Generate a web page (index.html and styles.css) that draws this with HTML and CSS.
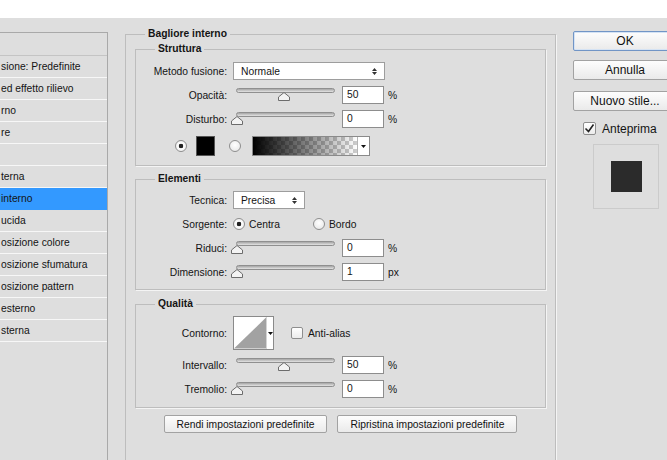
FILE: index.html
```html
<!DOCTYPE html>
<html lang="it">
<head>
  <meta charset="UTF-8" />
  <meta name="viewport" content="width=device-width, initial-scale=1.0"/>
  <title>Stile livello</title>
  <link rel="stylesheet" href="styles.css">
</head>
<body>
  <div class="topbar"></div>

  <div class="dialog">
    <ul class="styles-list">
      <li class="head"></li>
      <li>sione: Predefinite</li>
      <li>ed effetto rilievo</li>
      <li>rno</li>
      <li>re</li>
      <li></li>
      <li>terna</li>
      <li class="active">interno</li>
      <li>ucida</li>
      <li>osizione colore</li>
      <li>osizione sfumatura</li>
      <li>osizione pattern</li>
      <li>esterno</li>
      <li>sterna</li>
    </ul>

    <fieldset class="effect">
      <legend>Bagliore interno</legend>

      <fieldset class="group struttura">
        <legend>Struttura</legend>
        <div class="row">
          <span class="lbl">Metodo fusione:</span>
          <div class="select blend">Normale
            <svg class="updown" width="5" height="9" viewBox="0 0 5 9"><path d="M0 4 L2.5 1 L5 4 Z M0 5 L2.5 8 L5 5 Z"/></svg>
          </div>
        </div>
        <div class="row">
          <span class="lbl">Opacità:</span>
          <div class="slider"><div class="track"></div>
            <svg class="thumb" style="left:42px" width="12" height="9" viewBox="0 0 12 9"><path d="M6 0.5 L11.5 5 V8.5 H0.5 V5 Z"/></svg>
          </div>
          <div class="field">50</div><span class="unit">%</span>
        </div>
        <div class="row">
          <span class="lbl">Disturbo:</span>
          <div class="slider"><div class="track"></div>
            <svg class="thumb" style="left:-5px" width="12" height="9" viewBox="0 0 12 9"><path d="M6 0.5 L11.5 5 V8.5 H0.5 V5 Z"/></svg>
          </div>
          <div class="field">0</div><span class="unit">%</span>
        </div>
        <div class="row colors">
          <span class="radio on"></span>
          <span class="swatch"></span>
          <span class="radio"></span>
          <div class="gradient-pick">
            <div class="gradient-fill"></div>
            <div class="drop"><svg width="5" height="3" viewBox="0 0 5 3"><path d="M0 0 H5 L2.5 3 Z"/></svg></div>
          </div>
        </div>
      </fieldset>

      <fieldset class="group elementi">
        <legend>Elementi</legend>
        <div class="row">
          <span class="lbl">Tecnica:</span>
          <div class="select technique">Precisa
            <svg class="updown" width="5" height="9" viewBox="0 0 5 9"><path d="M0 4 L2.5 1 L5 4 Z M0 5 L2.5 8 L5 5 Z"/></svg>
          </div>
        </div>
        <div class="row">
          <span class="lbl">Sorgente:</span>
          <span class="option first"><span class="radio on"></span>Centra</span>
          <span class="option"><span class="radio"></span>Bordo</span>
        </div>
        <div class="row">
          <span class="lbl">Riduci:</span>
          <div class="slider"><div class="track"></div>
            <svg class="thumb" style="left:-5px" width="12" height="9" viewBox="0 0 12 9"><path d="M6 0.5 L11.5 5 V8.5 H0.5 V5 Z"/></svg>
          </div>
          <div class="field">0</div><span class="unit">%</span>
        </div>
        <div class="row">
          <span class="lbl">Dimensione:</span>
          <div class="slider"><div class="track"></div>
            <svg class="thumb" style="left:-5px" width="12" height="9" viewBox="0 0 12 9"><path d="M6 0.5 L11.5 5 V8.5 H0.5 V5 Z"/></svg>
          </div>
          <div class="field">1</div><span class="unit">px</span>
        </div>
      </fieldset>

      <fieldset class="group qualita">
        <legend>Qualità</legend>
        <div class="row tall">
          <span class="lbl">Contorno:</span>
          <div class="contour">
            <svg width="33" height="32" viewBox="0 0 33 32"><path d="M0 32 L33 0 V32 Z"/></svg>
            <div class="drop"><svg width="5" height="3" viewBox="0 0 5 3"><path d="M0 0 H5 L2.5 3 Z"/></svg></div>
          </div>
          <span class="check"></span><span>Anti-alias</span>
        </div>
        <div class="row">
          <span class="lbl">Intervallo:</span>
          <div class="slider"><div class="track"></div>
            <svg class="thumb" style="left:42px" width="12" height="9" viewBox="0 0 12 9"><path d="M6 0.5 L11.5 5 V8.5 H0.5 V5 Z"/></svg>
          </div>
          <div class="field">50</div><span class="unit">%</span>
        </div>
        <div class="row">
          <span class="lbl">Tremolio:</span>
          <div class="slider"><div class="track"></div>
            <svg class="thumb" style="left:-5px" width="12" height="9" viewBox="0 0 12 9"><path d="M6 0.5 L11.5 5 V8.5 H0.5 V5 Z"/></svg>
          </div>
          <div class="field">0</div><span class="unit">%</span>
        </div>
      </fieldset>

      <div class="defaults">
        <button class="btn small">Rendi impostazioni predefinite</button>
        <button class="btn small">Ripristina impostazioni predefinite</button>
      </div>
    </fieldset>

    <div class="actions">
      <button class="btn default">OK</button>
      <button class="btn">Annulla</button>
      <button class="btn new">Nuovo stile...</button>
      <label class="preview-toggle">
        <span class="check on"><svg width="11" height="11" viewBox="0 0 11 11"><path d="M1.5 5.5 L4.5 8.5 L9.5 1.5"/></svg></span>
        Anteprima
      </label>
      <div class="preview"><div class="preview-square"></div></div>
    </div>
  </div>
</body>
</html>
```

FILE: styles.css
```css
html, body {
  margin: 0;
  height: 460px;
  overflow: hidden;
}
body {
  font-family: "Liberation Sans", Arial, sans-serif;
  font-size: 10.3px;
  color: #141414;
  background: #dedede;
}
.topbar {
  height: 18px;
  background: #fff;
}
.dialog {
  display: flex;
  align-items: flex-start;
  padding-top: 10px;
}

/* left style list */
.styles-list {
  flex-shrink: 0;
  width: 107px;
  height: 460px;
  margin: 4px 0 0;
  padding: 0;
  list-style: none;
  border-top: 1px solid #a9a9a9;
  border-right: 1px solid #a9a9a9;
}
.styles-list li {
  height: 21px;
  line-height: 21px;
  padding-left: 1px;
  white-space: nowrap;
  overflow: hidden;
  border-bottom: 1px solid #f7f7f7;
}
.styles-list li.head {
  height: 22px;
  border-bottom-color: #c4c4c4;
}
.styles-list li.active {
  background: #3399ff;
  border-bottom-color: #3399ff;
}

/* group boxes */
fieldset {
  margin: 0;
  border: 1px solid #bdbdbd;
  box-shadow: 1px 1px 0 #f4f4f4;
}
legend {
  padding: 0 3px;
  line-height: 12px;
  font-weight: bold;
}
.effect {
  flex-shrink: 0;
  box-sizing: border-box;
  width: 431px;
  height: 470px;
  margin-left: 17px;
  padding: 3px 9px 0;
}
.effect > legend {
  margin-left: 10px;
}
.group {
  padding: 0;
}
.group > legend {
  margin-left: 19px;
}
.struttura {
  padding: 1px 0 9px;
}
.elementi {
  margin-top: 7px;
  padding: 0 0 8px;
}
.qualita {
  margin-top: 8px;
  padding: 0 0 9px;
}

/* rows */
.row {
  display: flex;
  align-items: center;
  height: 18px;
  margin-top: 6px;
}
.row.tall {
  height: 34px;
}
.row.colors {
  height: 20px;
  margin-top: 8px;
}
.lbl {
  width: 91px;
  margin-right: 6px;
  text-align: right;
}

.select {
  box-sizing: border-box;
  height: 18px;
  display: flex;
  align-items: center;
  justify-content: space-between;
  padding: 0 7px 0 7px;
  background: #fff;
  border: 1px solid #9d9d9d;
}
.select.blend { width: 152px; }
.select.technique { width: 72px; }
.updown { fill: #333; }

.slider {
  position: relative;
  width: 99px;
  height: 18px;
  margin: 0 7px 0 3px;
}
.track {
  box-sizing: border-box;
  height: 5px;
  margin-top: 2px;
  border: 1px solid #8f8f8f;
  border-radius: 3px;
  background: linear-gradient(#a5a5a5, #e4e4e4);
}
.thumb {
  position: absolute;
  top: 6px;
  fill: #f3f3f3;
  stroke: #6c6c6c;
}
.field {
  box-sizing: border-box;
  width: 42px;
  height: 18px;
  line-height: 16px;
  padding-left: 4px;
  background: #fff;
  border: 1px solid #8d8d8d;
}
.unit {
  margin-left: 4px;
}

.radio {
  flex-shrink: 0;
  box-sizing: border-box;
  width: 12px;
  height: 12px;
  border-radius: 50%;
  border: 1px solid #8e8e8e;
  background: radial-gradient(circle at 50% 40%, #fff, #e4e4e4);
}
.radio.on {
  background: radial-gradient(circle, #222 0 2px, #fff 2.6px, #e6e6e6);
}
.colors .radio:first-child { margin-left: 39px; }
.swatch {
  box-sizing: border-box;
  width: 19px;
  height: 20px;
  margin: 0 14px 0 9px;
  background: #000;
  border: 1px solid #555;
}
.gradient-pick {
  display: flex;
  box-sizing: border-box;
  width: 118px;
  height: 20px;
  margin-left: 11px;
  border: 1px solid #8a8a8a;
}
.gradient-fill {
  flex: 1;
  background:
    linear-gradient(to right, #000, rgba(0, 0, 0, 0)),
    repeating-conic-gradient(#fff 0 25%, #cdcdcd 0 50%) 0 0 / 8px 8px;
}
.drop {
  display: flex;
  align-items: center;
  justify-content: center;
  width: 11px;
  background: #fff;
  border-left: 1px solid #b5b5b5;
}
.drop svg { fill: #111; }

.option {
  display: flex;
  align-items: center;
  gap: 4px;
}
.option.first {
  width: 80px;
}

.contour {
  display: flex;
  box-sizing: border-box;
  width: 41px;
  height: 34px;
  background: #fff;
  border: 1px solid #8a8a8a;
}
.contour > svg { fill: #a2a2a2; }
.contour .drop {
  width: 6px;
  border-left-color: #d4d4d4;
}
.check {
  display: flex;
  align-items: center;
  justify-content: center;
  box-sizing: border-box;
  width: 12px;
  height: 12px;
  margin: 0 5px 0 17px;
  background: linear-gradient(#fff, #ececec);
  border: 1px solid #8e8e8e;
  border-radius: 2px;
}

/* buttons */
.btn {
  box-sizing: border-box;
  height: 20px;
  padding: 0;
  font-family: "Liberation Sans", Arial, sans-serif;
  font-size: 12px;
  color: #111;
  background: linear-gradient(#fdfdfd, #eaeaea);
  border: 1px solid #a2a2a2;
  border-radius: 2px;
}
.btn.default {
  border-color: #7195c6;
  box-shadow: inset 0 0 0 1px #d5e3f4;
}
.btn.small {
  height: 18px;
  padding: 0 12px;
  font-size: 10.3px;
}
.defaults {
  display: flex;
  justify-content: center;
  gap: 10px;
  margin-top: 7px;
}

.actions {
  flex-shrink: 0;
  display: flex;
  flex-direction: column;
  width: 104px;
  margin-left: 17px;
  padding-top: 3px;
}
.actions .btn + .btn { margin-top: 9px; }
.actions .btn.new { margin-top: 11px; }
.preview-toggle {
  display: flex;
  align-items: center;
  height: 19px;
  margin-top: 8px;
  padding-left: 10px;
  font-size: 12px;
}
.preview-toggle .check {
  width: 13px;
  height: 13px;
  margin: 0 6px 0 0;
}
.check svg {
  fill: none;
  stroke: #222;
  stroke-width: 1.6;
}
.preview {
  display: flex;
  align-items: center;
  justify-content: center;
  box-sizing: border-box;
  width: 66px;
  height: 65px;
  margin: 6px 0 0 20px;
  border: 1px solid #cbcbcb;
}
.preview-square {
  width: 31px;
  height: 31px;
  background: #2b2b2b;
}
```
